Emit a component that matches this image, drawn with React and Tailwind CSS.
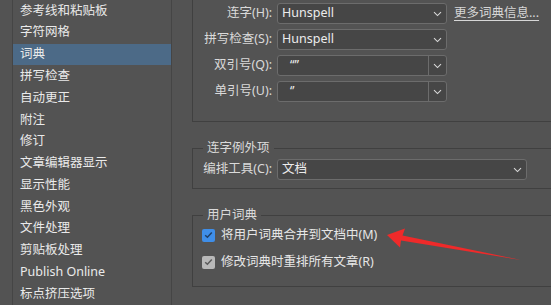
import React from "react";

const sidebarItems = [
  "参考线和粘贴板",
  "字符网格",
  "词典",
  "拼写检查",
  "自动更正",
  "附注",
  "修订",
  "文章编辑器显示",
  "显示性能",
  "黑色外观",
  "文件处理",
  "剪贴板处理",
  "Publish Online",
  "标点挤压选项",
];

const Chevron = () => (
  <svg width="9" height="6" viewBox="0 0 9 6" fill="none">
    <path d="M1 1.2L4.5 4.6L8 1.2" stroke="#d8d8d8" strokeWidth="1.1" />
  </svg>
);

const Dropdown = ({ value, width, split, quote }) => (
  <div
    className={`flex h-[21px] items-stretch rounded-[3px] border border-[#6c6c6c] bg-[#464646] text-[#ececec] ${width}`}
  >
    <div className={`flex flex-1 items-center ${quote ? "pl-[12px]" : "pl-[4px]"} text-[12.5px]`}>
      {value}
    </div>
    {split ? (
      <div className="flex w-[18px] items-center justify-center border-l border-[#6c6c6c]">
        <Chevron />
      </div>
    ) : (
      <div className="flex w-[18px] items-center justify-center">
        <Chevron />
      </div>
    )}
  </div>
);

const Row = ({ label, children }) => (
  <div className="flex items-center">
    <div className="w-[79px] text-right text-[12.5px] text-[#dadada] whitespace-nowrap">{label}</div>
    <div className="ml-[5px] flex items-center">{children}</div>
  </div>
);

const CheckBox = ({ disabled }) => (
  <div
    className={`flex h-[13px] w-[13px] items-center justify-center rounded-[2px] ${
      disabled ? "bg-[#b9b9b9]" : "bg-[#3f8ee8]"
    }`}
  >
    <svg width="9" height="8" viewBox="0 0 9 8" fill="none">
      <path
        d="M1.2 4.2L3.4 6.3L7.8 1.6"
        stroke={disabled ? "#5a5a5a" : "#1f3f66"}
        strokeWidth="1.5"
      />
    </svg>
  </div>
);

export default function App() {
  return (
    <div className="relative flex h-[305px] w-[551px] overflow-hidden bg-[#535353] font-['Noto_Sans','Noto_Sans_CJK_SC',sans-serif]">
      {/* Sidebar */}
      <div className="ml-[12px] h-full w-[160px] border-x border-[#454545]">
        <div className="flex flex-col">
          {sidebarItems.map((item) => (
            <div
              key={item}
              className={`flex h-[21.8px] items-center pl-[7px] text-[12.5px] text-[#eaeaea] ${
                item === "词典" ? "bg-[#4c6a87]" : ""
              }`}
            >
              {item}
            </div>
          ))}
        </div>
      </div>

      {/* Main */}
      <div className="flex flex-1 flex-col pl-[20px]">
        {/* Dictionary group */}
        <div className="flex h-[122px] flex-col gap-[5px] border-b border-l border-[#404040] pt-[3px]">
          <Row label="连字(H):">
            <Dropdown value="Hunspell" width="w-[170px]" />
            <span className="ml-[7px] text-[12.5px] text-[#d6d6d6] underline underline-offset-[3px]">
              更多词典信息...
            </span>
          </Row>
          <Row label="拼写检查(S):">
            <Dropdown value="Hunspell" width="w-[170px]" />
          </Row>
          <Row label="双引号(Q):">
            <Dropdown value="“”" width="w-[170px]" split quote />
          </Row>
          <Row label="单引号(U):">
            <Dropdown value="‘’" width="w-[170px]" split quote />
          </Row>
        </div>

        {/* Hyphenation exceptions */}
        <fieldset className="mt-[17px] border-b border-l border-t border-[#404040] pb-[8px]">
          <legend className="ml-[10px] px-[4px] text-[12.5px] leading-[18px] text-[#dadada]">连字例外项</legend>
          <div className="mt-[2px]">
            <Row label="编排工具(C):">
              <Dropdown value="文档" width="w-[250px]" />
            </Row>
          </div>
        </fieldset>

        {/* User dictionary */}
        <fieldset className="mt-[17px] h-[81px] border-b border-l border-t border-[#404040]">
          <legend className="ml-[10px] px-[4px] text-[12.5px] leading-[18px] text-[#dadada]">用户词典</legend>
          <div className="mt-[2px] flex flex-col gap-[8px] pl-[9px]">
            <div className="flex items-center gap-[6px] text-[12.5px] text-[#e6e6e6]">
              <CheckBox />
              <span>将用户词典合并到文档中(M)</span>
            </div>
            <div className="flex items-center gap-[6px] text-[12.5px] text-[#e6e6e6]">
              <CheckBox disabled />
              <span>修改词典时重排所有文章(R)</span>
            </div>
          </div>
        </fieldset>
      </div>

      {/* Red annotation arrow */}
      <svg className="pointer-events-none absolute left-0 top-0" width="551" height="305" viewBox="0 0 551 305">
        <polygon
          points="387,235 405,228.5 402.5,235.5 521,260 401,240.5 400,247.5"
          fill="#ef2a2a"
        />
      </svg>
    </div>
  );
}
